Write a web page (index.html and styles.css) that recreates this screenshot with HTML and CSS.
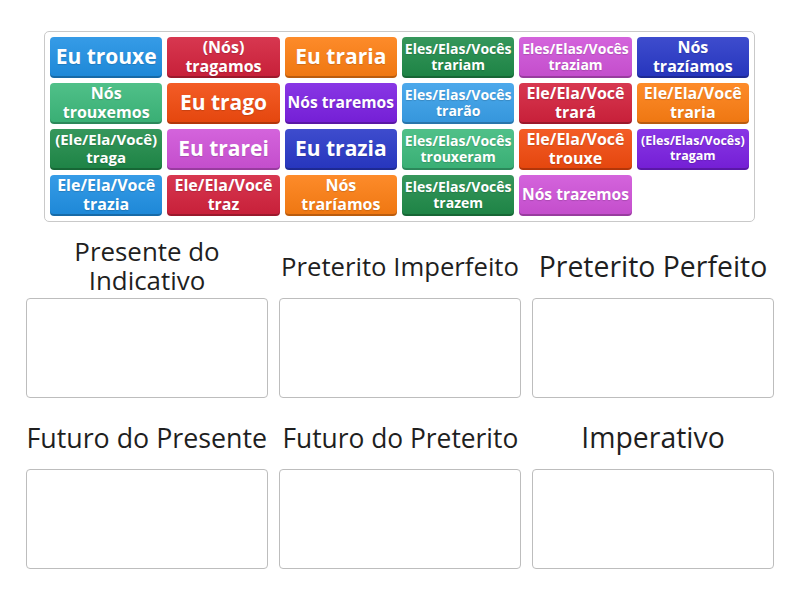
FILE: index.html
```html
<!DOCTYPE html>
<html lang="pt">
<head>
<meta charset="utf-8">
<title>Group sort</title>
<link rel="stylesheet" href="styles.css">
</head>
<body>
<div class="pool">
  <div class="tile blue xl">Eu trouxe</div>
  <div class="tile red l">(Nós)<br>tragamos</div>
  <div class="tile orange xl">Eu traria</div>
  <div class="tile green s">Eles/Elas/Vocês trariam</div>
  <div class="tile magenta s">Eles/Elas/Vocês traziam</div>
  <div class="tile navy l">Nós<br>trazíamos</div>

  <div class="tile lgreen l">Nós<br>trouxemos</div>
  <div class="tile ored xl">Eu trago</div>
  <div class="tile purple one">Nós traremos</div>
  <div class="tile lblue s">Eles/Elas/Vocês trarão</div>
  <div class="tile red l">Ele/Ela/Você<br>trará</div>
  <div class="tile orange l">Ele/Ela/Você<br>traria</div>

  <div class="tile green m">(Ele/Ela/Você)<br>traga</div>
  <div class="tile magenta xl">Eu trarei</div>
  <div class="tile navy xl">Eu trazia</div>
  <div class="tile lgreen s">Eles/Elas/Vocês trouxeram</div>
  <div class="tile ored l">Ele/Ela/Você<br>trouxe</div>
  <div class="tile purple xs">(Eles/Elas/Vocês)<br>tragam</div>

  <div class="tile blue l">Ele/Ela/Você<br>trazia</div>
  <div class="tile red l">Ele/Ela/Você<br>traz</div>
  <div class="tile orange l">Nós<br>traríamos</div>
  <div class="tile green s">Eles/Elas/Vocês trazem</div>
  <div class="tile magenta one">Nós trazemos</div>
</div>

<div class="groups">
  <div class="group">
    <div class="title t-pres">Presente do Indicativo</div>
    <div class="box"></div>
  </div>
  <div class="group">
    <div class="title t-imp">Preterito Imperfeito</div>
    <div class="box"></div>
  </div>
  <div class="group">
    <div class="title t-perf">Preterito Perfeito</div>
    <div class="box"></div>
  </div>
  <div class="group">
    <div class="title"><span class="squeeze sq-fpres">Futuro do Presente</span></div>
    <div class="box"></div>
  </div>
  <div class="group">
    <div class="title"><span class="squeeze sq-fpret">Futuro do Preterito</span></div>
    <div class="box"></div>
  </div>
  <div class="group">
    <div class="title t-perf">Imperativo</div>
    <div class="box"></div>
  </div>
</div>
</body>
</html>
```
FILE: styles.css
```css
html, body {
  margin: 0;
  padding: 0;
  background: #ffffff;
}

body {
  font-family: "Open Sans", "Liberation Sans", sans-serif;
  color: #222222;
}

.pool {
  box-sizing: border-box;
  width: 711px;
  margin: 31px 0 0 44px;
  padding: 5px;
  border: 1px solid #c9c9c9;
  border-radius: 5px;
  display: grid;
  grid-template-columns: repeat(6, 1fr);
  grid-auto-rows: 41px;
  gap: 5px;
}

.tile {
  display: flex;
  align-items: center;
  justify-content: center;
  text-align: center;
  color: #ffffff;
  font-weight: 700;
  border-radius: 4px;
  padding: 0 1px 2px;
  box-sizing: border-box;
  background-image: linear-gradient(rgba(255,255,255,0.10), rgba(0,0,0,0.06));
  box-shadow: inset 0 -2px 0 rgba(0,0,0,0.22);
  text-shadow: 0 1px 1px rgba(0,0,0,0.15);
  line-height: 1.15;
}

.xl  { font-size: 21px; }
.l   { font-size: 16px; }
.one { font-size: 15.6px; white-space: nowrap; }
.m   { font-size: 15px; }
.s   { font-size: 14px; line-height: 1.1; }
.xs  { font-size: 12.5px; }

.blue    { background-color: #1f90e4; }
.red     { background-color: #d3213c; }
.orange  { background-color: #fd7e12; }
.green   { background-color: #1f8b49; }
.magenta { background-color: #cf52d8; }
.navy    { background-color: #2838c8; }
.lgreen  { background-color: #3cb97b; }
.ored    { background-color: #f24a0e; }
.purple  { background-color: #7b20e2; }
.lblue   { background-color: #389fe9; }

.groups {
  display: grid;
  grid-template-columns: repeat(3, 242px);
  column-gap: 11px;
  row-gap: 7px;
  margin: 12px 0 0 26px;
}

.group {
  display: flex;
  flex-direction: column;
}

.title {
  height: 64px;
  display: flex;
  align-items: center;
  justify-content: center;
  text-align: center;
  line-height: 29px;
  color: #1f1f1f;
  white-space: normal;
}

.t-pres { font-size: 25.9px; }
.t-imp  { font-size: 25.7px; }
.t-perf { font-size: 28.4px; }

.squeeze {
  display: inline-block;
  font-size: 28px;
  white-space: nowrap;
}
.sq-fpres { transform: scaleX(0.957); }
.sq-fpret { transform: scaleX(0.941); }

.box {
  box-sizing: border-box;
  height: 100px;
  border: 1px solid #bdbdbd;
  border-radius: 4px;
  background: #ffffff;
}
```
